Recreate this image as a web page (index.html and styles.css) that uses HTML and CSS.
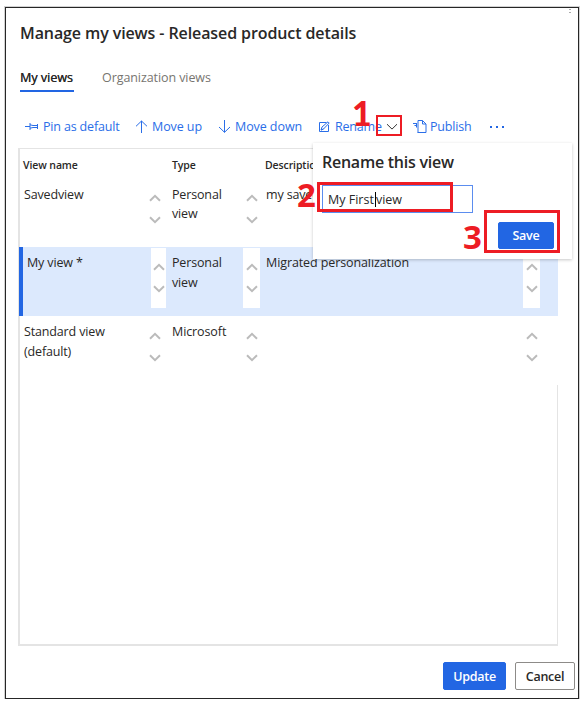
FILE: index.html
```html
<!DOCTYPE html>
<html lang="en">
<head>
<meta charset="utf-8">
<title>Manage my views</title>
<link rel="stylesheet" href="styles.css">
</head>
<body>
<svg class="defs" width="0" height="0">
  <symbol id="up" viewBox="0 0 12 8"><path d="M1 6.8 6 1.9l5 4.9"/></symbol>
  <symbol id="down" viewBox="0 0 12 8"><path d="M1 1.2 6 6.1l5-4.9"/></symbol>
</svg>
<main class="dialog">
  <i class="grip"></i>
  <h1 class="title">Manage my views - Released product details</h1>
  <nav class="tabs">
    <a class="tab active"><span>My views</span></a>
    <a class="tab"><span>Organization views</span></a>
  </nav>
  <div class="toolbar">
    <a class="tool"><svg width="14" height="10" viewBox="0 0 14 10"><path d="M0 4.500h5M5 1v7M5 2.800l3 .7h4.500M5 6.200l3-.7h4.500M12.500 2v5"/></svg><span>Pin as default</span></a>
    <a class="tool"><svg width="13" height="14" viewBox="0 0 13 14"><path d="M6.500 13V1M1 6.300 6.500 1 12 6.300"/></svg><span>Move up</span></a>
    <a class="tool"><svg width="13" height="14" viewBox="0 0 13 14"><path d="M6.500 0V12.300M1 7 6.500 12.300 12 7"/></svg><span>Move down</span></a>
    <a class="tool rename"><svg width="12" height="12" viewBox="0 0 12 12"><path d="M8.500 1.500h-7v9h9V4M3 9l1-3L10 .8l1.200 1.200L5.500 8zM3 9l2.500-1"/></svg><span>Rename</span></a>
    <a class="tool caret"><svg width="12" height="8"><use href="#down"/></svg></a>
    <a class="tool publish"><svg width="14" height="14" viewBox="0 0 14 14"><path d="M5 12.500V.5h4.500L13 4v8.500H4.500M9.500 .5V4H13M0 3.500h3.500M1.500 5.500h2.500M3.500 3v4.500"/></svg><span>Publish</span></a>
    <a class="tool dots"><i></i><i></i><i></i></a>
  </div>
  <section class="table">
    <div class="row head"><b>View name</b><b>Type</b><b>Description</b></div>
    <div class="row first">
      <p>Savedview</p><div class="spin lead"><svg><use href="#up"/></svg><svg><use href="#down"/></svg></div>
      <p>Personal view</p><div class="spin"><svg><use href="#up"/></svg><svg><use href="#down"/></svg></div>
      <p>my savedview</p>
    </div>
    <div class="row selected">
      <p>My view *</p><div class="spin"><svg><use href="#up"/></svg><svg><use href="#down"/></svg></div>
      <p>Personal view</p><div class="spin"><svg><use href="#up"/></svg><svg><use href="#down"/></svg></div>
      <p class="wide">Migrated personalization</p><div class="spin"><svg><use href="#up"/></svg><svg><use href="#down"/></svg></div>
    </div>
    <div class="row last">
      <p>Standard view (default)</p><div class="spin lead"><svg><use href="#up"/></svg><svg><use href="#down"/></svg></div>
      <p class="wide">Microsoft</p><div class="spin"><svg><use href="#up"/></svg><svg><use href="#down"/></svg></div>
      <p></p><div class="spin"><svg><use href="#up"/></svg><svg><use href="#down"/></svg></div>
    </div>
  </section>
  <footer class="actions"><button class="btn primary"><span>Update</span></button><button class="btn cancel"><span>Cancel</span></button></footer>
  <aside class="popup">
    <h2>Rename this view</h2>
    <div class="field"><span>My First</span><i class="cursor"></i><span>view</span></div>
    <button class="btn primary save"><span>Save</span></button>
  </aside>
  <div class="mark mark1"></div><b class="num num1">1</b>
  <div class="mark mark2"></div><b class="num num2">2</b>
  <div class="mark mark3"></div><b class="num num3">3</b>
</main>
</body>
</html>
```
FILE: styles.css
```css
* { box-sizing: border-box; }
body { margin: 0; padding: 7px 0 0 5px; background: #fff; font-family: "Open Sans", "Noto Sans", sans-serif; font-size: 12.5px; color: #292827; }
p, h1, h2 { margin: 0; }
.defs { position: absolute; }
svg { fill: none; stroke: currentColor; flex: none; }
.dialog { position: relative; width: 574px; height: 692px; border: 1px solid #262626; box-shadow: 0 0 0 1px #d2d2d2; display: flex; flex-direction: column; }
.grip { position: absolute; left: 563px; top: 1px; width: 2px; height: 4px; border-top: 1px solid #aaa; border-bottom: 1px solid #aaa; }
.title { height: 50px; padding: 13px 0 0 14px; font-size: 16px; line-height: 24px; font-weight: 600; letter-spacing: -.1px; white-space: nowrap; }
.tabs { display: flex; gap: 28px; height: 49px; padding-left: 14px; }
.tab { height: 34px; padding-top: 10px; line-height: 20px; color: #777570; letter-spacing: -.08px; white-space: nowrap; }
.tab.active { width: 54px; color: #292827; border-bottom: 2px solid #2266e3; letter-spacing: 0; text-shadow: .3px 0 #292827; }
.toolbar { display: grid; grid-template-columns: 110px 83px 100px 68px 27px 77px 20px; height: 40px; padding: 0 0 1px 19px; color: #2a6ee8; align-items: center; }
.tool { display: flex; align-items: center; gap: 4px; height: 20px; white-space: nowrap; letter-spacing: -.08px; }
.tool:first-child { letter-spacing: -.16px; }
.tool.rename { gap: 5px; letter-spacing: -.2px; }
.caret { color: #333; }
.tool.publish { gap: 3px; letter-spacing: -.2px; }
.dots { gap: 4px; }
.dots i { width: 2px; height: 2px; background: #2266e3; }
.table { width: 540px; height: 498px; margin: 1px 0 0 12px; border: solid #e4e4e4; border-width: 1px 1px 2px 2px; flex: none; }
.row { display: grid; grid-template-columns: 131px 15px 77px 17px 263px 17px 18px; width: 539px; height: 69px; background: #fff; line-height: 19.5px; letter-spacing: -.15px; }
.row { margin-left: -1px; border-left: 1px solid #e4e4e4; }
.row p { padding-left: 4px; }
.row p:nth-of-type(n+2) { padding-left: 6px; }
.row .wide { letter-spacing: -.1px; }
.row.head { grid-template-columns: 149px 93px 200px; height: 32px; padding: 7px 0 0 3px; line-height: 18px; font-size: 10.5px; font-weight: 600; letter-spacing: -.1px; }
.head b { font-weight: 600; }
.first { height: 66px; padding-top: 4px; line-height: 19px; }
.selected { background: #dce9fd; padding-top: 1px; border-left: 4px solid #2266e3; margin-left: -1px; width: 539px; grid-template-columns: 128px 15px 77px 17px 263px 17px 17px; }
.selected p, .last p { padding-top: 5px; }
.last { padding-top: 1px; }
.spin { height: 60px; background: #fff; display: flex; flex-direction: column; align-items: center; padding-top: 15px; gap: 14px; color: #bbb; }
.first .spin { padding-top: 9px; }
.spin svg { width: 12px; height: 8px; stroke-width: 2; }
.spin.lead { margin-left: -4px; margin-right: 4px; }
.actions { display: flex; justify-content: flex-end; gap: 9px; padding: 16px 3px 0 0; }
.btn { font: 600 12.5px "Open Sans", sans-serif; letter-spacing: -.25px; height: 28px; border-radius: 2px; border: 1px solid #8d8b88; background: #fff; color: #292827; padding: 0; }
.btn.primary { background: #2266e3; border-color: #2266e3; color: #fff; width: 63px; }
.cancel { width: 60px; }
.popup { position: absolute; left: 307px; top: 135px; width: 259px; height: 116px; background: #fff; box-shadow: 0 1px 3px rgba(0,0,0,.22); padding: 7px 0 0 9px; }
.popup h2 { font-size: 16px; line-height: 24px; font-weight: 600; letter-spacing: -.25px; }
.field { width: 151px; height: 28px; border: 1px solid #5b8def; margin-top: 11px; padding-left: 5px; display: flex; align-items: center; letter-spacing: 0; }
.cursor { width: 1px; height: 15px; background: #000; margin: 0 0 0 1px; }
.popup .save { display: block; width: 56px; height: 27px; margin: 9px 0 0 176px; }
.mark { position: absolute; border: 3px solid #ed1c24; }
.mark1 { left: 370px; top: 107px; width: 26px; height: 21px; border-width: 2px; }
.mark2 { left: 311px; top: 174px; width: 136px; height: 30px; }
.mark3 { left: 478px; top: 202px; width: 76px; height: 43px; }
.num { position: absolute; font: 700 33px/40px "Open Sans", sans-serif; color: #ed1c24; }
.num1 { left: 346px; top: 85px; font: 900 34px/40px Lato, sans-serif; }
.num2 { left: 291px; top: 167px; }
.num3 { left: 457px; top: 209px; }
```
